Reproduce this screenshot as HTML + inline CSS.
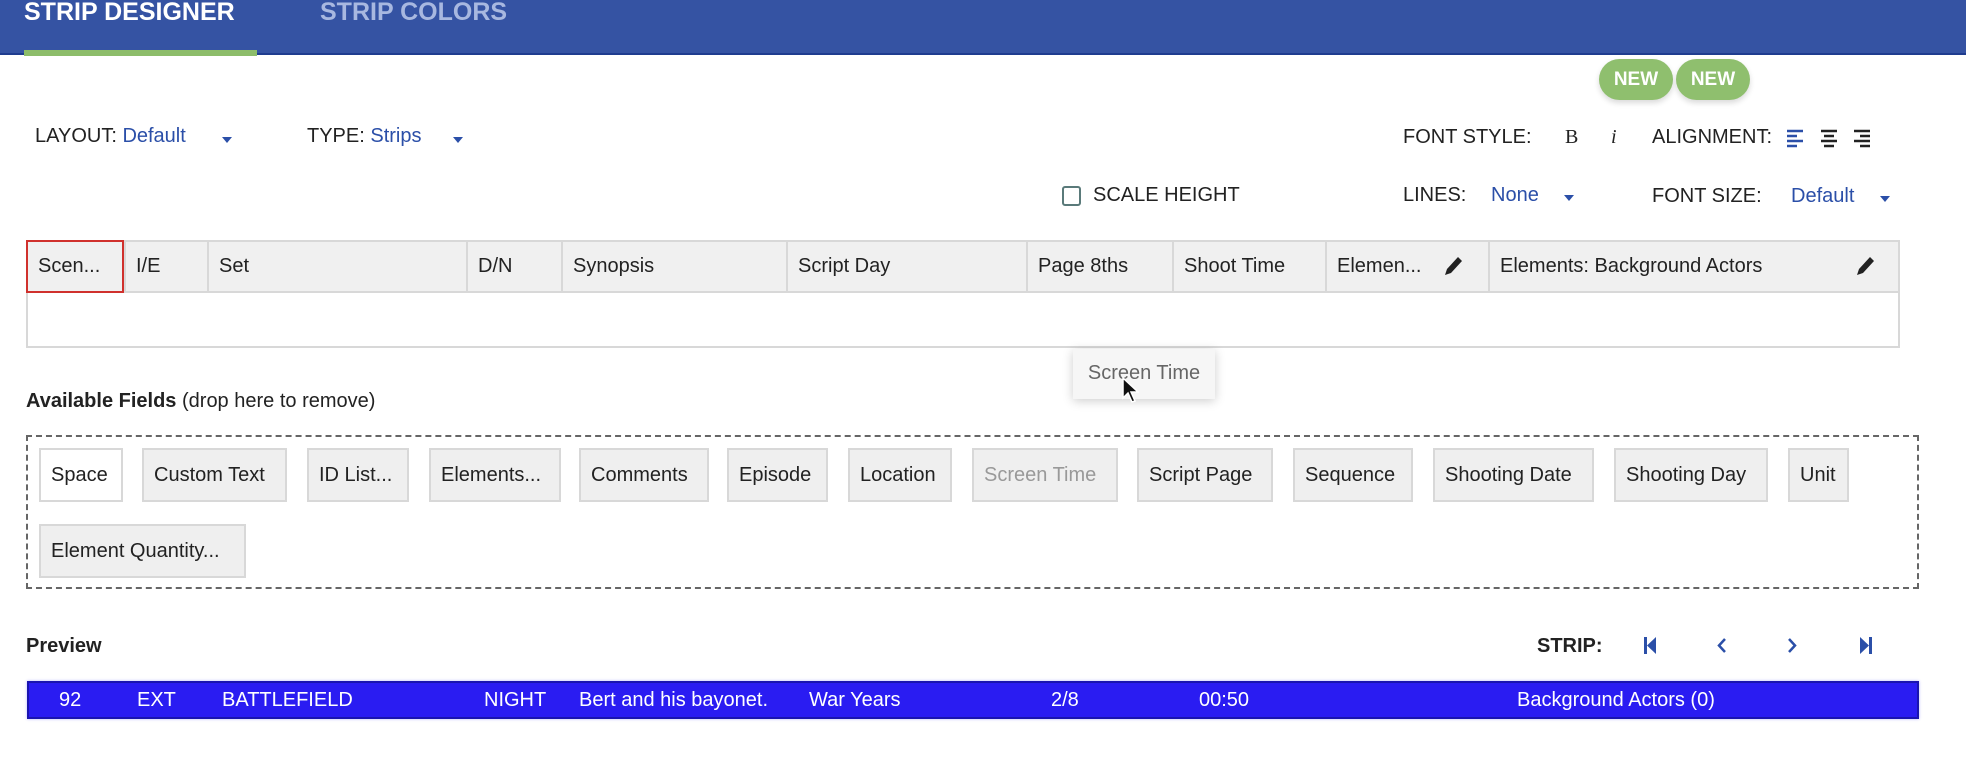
<!DOCTYPE html>
<html><head><meta charset="utf-8"><style>
*{margin:0;padding:0;box-sizing:border-box}
body{width:1966px;height:776px;overflow:hidden;background:#fff;font-family:"Liberation Sans",Arial,sans-serif;color:#222;position:relative;font-size:20px}
.a{position:absolute;white-space:nowrap}
.hdr{left:0;top:0;width:1966px;height:55px;background:#3553a3;border-bottom:2px solid #1f3c8f}
.tab{top:-2px;font-size:25px;font-weight:bold;color:#fff}
.blue{color:#2b4fa8}
.caret{width:0;height:0;border-left:5px solid transparent;border-right:5px solid transparent;border-top:6px solid #2b4fa8}
.new{top:59px;height:41px;width:74px;border-radius:21px;background:#8fbf6e;color:#fff;font-weight:bold;font-size:19px;text-align:center;line-height:41px;box-shadow:0 3px 6px rgba(0,0,0,.15)}
.th{top:240px;height:53px;background:#f0f0f0;border:2px solid #d8d8d8;border-right:none;line-height:49px;padding-left:10px;font-size:20px}
.chip{height:54px;background:#efefef;border:2px solid #d8d8d8;line-height:50px;padding-left:10px;font-size:20px}
.st{top:681px;color:#fff;font-size:20px;line-height:38px}
</style></head><body>
<div class="a hdr"></div>
<div class="a tab" style="left:24px">STRIP DESIGNER</div>
<div class="a tab" style="left:320px;color:#a8b8e0">STRIP COLORS</div>
<div class="a" style="left:24px;top:50px;width:233px;height:6px;background:#8dbd6a"></div>

<div class="a new" style="left:1599px">NEW</div>
<div class="a new" style="left:1676px">NEW</div>

<div class="a" style="left:35px;top:125px">LAYOUT: <span class="blue">Default</span></div>
<div class="a caret" style="left:222px;top:137px"></div>
<div class="a" style="left:307px;top:125px">TYPE: <span class="blue">Strips</span></div>
<div class="a caret" style="left:453px;top:137px"></div>

<div class="a" style="left:1403px;top:126px">FONT STYLE:</div>
<div class="a" style="left:1565px;top:126px;font-family:'Liberation Serif',serif">B</div>
<div class="a" style="left:1611px;top:126px;font-style:italic;font-family:'Liberation Serif',serif">i</div>
<div class="a" style="left:1652px;top:126px">ALIGNMENT:</div>
<svg class="a" style="left:1786px;top:128px" width="92" height="20">
<g stroke-width="2.5"><g stroke="#2b4fa8"><line x1="1" y1="3" x2="17" y2="3"/><line x1="1" y1="8" x2="11" y2="8"/><line x1="1" y1="13" x2="17" y2="13"/><line x1="1" y1="18" x2="11" y2="18"/></g>
<g stroke="#222"><line x1="35" y1="3" x2="51" y2="3"/><line x1="38" y1="8" x2="48" y2="8"/><line x1="35" y1="13" x2="51" y2="13"/><line x1="38" y1="18" x2="48" y2="18"/>
<line x1="68" y1="3" x2="84" y2="3"/><line x1="74" y1="8" x2="84" y2="8"/><line x1="68" y1="13" x2="84" y2="13"/><line x1="74" y1="18" x2="84" y2="18"/></g></g></svg>

<div class="a" style="left:1062px;top:186px;width:19px;height:20px;border:2px solid #5a7a7a;border-radius:3px"></div>
<div class="a" style="left:1093px;top:184px">SCALE HEIGHT</div>
<div class="a" style="left:1403px;top:184px">LINES:</div>
<div class="a blue" style="left:1491px;top:184px">None</div>
<div class="a caret" style="left:1564px;top:195px"></div>
<div class="a" style="left:1652px;top:185px">FONT SIZE:</div>
<div class="a blue" style="left:1791px;top:185px">Default</div>
<div class="a caret" style="left:1880px;top:196px"></div>

<div class="a" style="left:26px;top:291px;width:1874px;height:57px;border:2px solid #d8d8d8;border-top:none"></div>
<div class="a th" style="left:26px;width:98px;border:2px solid #d0312d">Scen...</div>
<div class="a th" style="left:124px;width:83px">I/E</div>
<div class="a th" style="left:207px;width:259px">Set</div>
<div class="a th" style="left:466px;width:95px">D/N</div>
<div class="a th" style="left:561px;width:225px">Synopsis</div>
<div class="a th" style="left:786px;width:240px">Script Day</div>
<div class="a th" style="left:1026px;width:146px">Page 8ths</div>
<div class="a th" style="left:1172px;width:153px">Shoot Time</div>
<div class="a th" style="left:1325px;width:163px">Elemen...</div>
<div class="a th" style="left:1488px;width:412px;border-right:2px solid #d8d8d8">Elements: Background Actors</div>
<svg class="a" style="left:1442px;top:254px" width="22" height="24"><path d="M3 21 L5 15 L16 3 L20 7 L9 19 Z" fill="#222"/></svg>
<svg class="a" style="left:1854px;top:254px" width="22" height="24"><path d="M3 21 L5 15 L16 3 L20 7 L9 19 Z" fill="#222"/></svg>

<div class="a" style="left:1073px;top:349px;width:142px;height:50px;background:#f6f6f6;box-shadow:0 2px 10px rgba(0,0,0,.2);color:#666;line-height:48px;text-align:center">Screen Time</div>
<svg class="a" style="left:1121px;top:376px" width="18" height="28"><path d="M2 2 L2 22 L7 17 L11 26 L14 25 L10 16 L17 16 Z" fill="#111" stroke="#fff" stroke-width="1.5"/></svg>

<div class="a" style="left:26px;top:390px"><b>Available Fields</b> (drop here to remove)</div>
<div class="a" style="left:26px;top:435px;width:1893px;height:154px;border:2px dashed #666"></div>
<div class="a chip" style="left:39px;top:448px;width:84px;background:#fff">Space</div>
<div class="a chip" style="left:142px;top:448px;width:145px">Custom Text</div>
<div class="a chip" style="left:307px;top:448px;width:102px">ID List...</div>
<div class="a chip" style="left:429px;top:448px;width:132px">Elements...</div>
<div class="a chip" style="left:579px;top:448px;width:130px">Comments</div>
<div class="a chip" style="left:727px;top:448px;width:101px">Episode</div>
<div class="a chip" style="left:848px;top:448px;width:104px">Location</div>
<div class="a chip" style="left:972px;top:448px;width:146px;color:#999">Screen Time</div>
<div class="a chip" style="left:1137px;top:448px;width:136px">Script Page</div>
<div class="a chip" style="left:1293px;top:448px;width:120px">Sequence</div>
<div class="a chip" style="left:1433px;top:448px;width:161px">Shooting Date</div>
<div class="a chip" style="left:1614px;top:448px;width:154px">Shooting Day</div>
<div class="a chip" style="left:1788px;top:448px;width:61px">Unit</div>
<div class="a chip" style="left:39px;top:524px;width:207px">Element Quantity...</div>

<div class="a" style="left:26px;top:635px;font-weight:bold">Preview</div>
<div class="a" style="left:1537px;top:635px;font-weight:bold">STRIP:</div>
<svg class="a" style="left:1640px;top:634px" width="240" height="24"><g fill="#2b4fa8">
<rect x="4" y="3" width="3" height="17"/><path d="M16 3 L7 11.5 L16 20 Z"/>
<path d="M85 5 L79 11.5 L85 18" fill="none" stroke="#2b4fa8" stroke-width="2.5"/>
<path d="M149 5 L155 11.5 L149 18" fill="none" stroke="#2b4fa8" stroke-width="2.5"/>
<rect x="229" y="3" width="3" height="17"/><path d="M220 3 L229 11.5 L220 20 Z"/></g></svg>

<div class="a" style="left:27px;top:681px;width:1892px;height:38px;background:#2a1cf2;border:2px solid #1a14b0;box-shadow:0 0 3px #b9b6ff"></div>
<div class="a st" style="left:59px">92</div>
<div class="a st" style="left:137px">EXT</div>
<div class="a st" style="left:222px">BATTLEFIELD</div>
<div class="a st" style="left:484px">NIGHT</div>
<div class="a st" style="left:579px">Bert and his bayonet.</div>
<div class="a st" style="left:809px">War Years</div>
<div class="a st" style="left:1051px">2/8</div>
<div class="a st" style="left:1199px">00:50</div>
<div class="a st" style="left:1517px">Background Actors (0)</div>
</body></html>
